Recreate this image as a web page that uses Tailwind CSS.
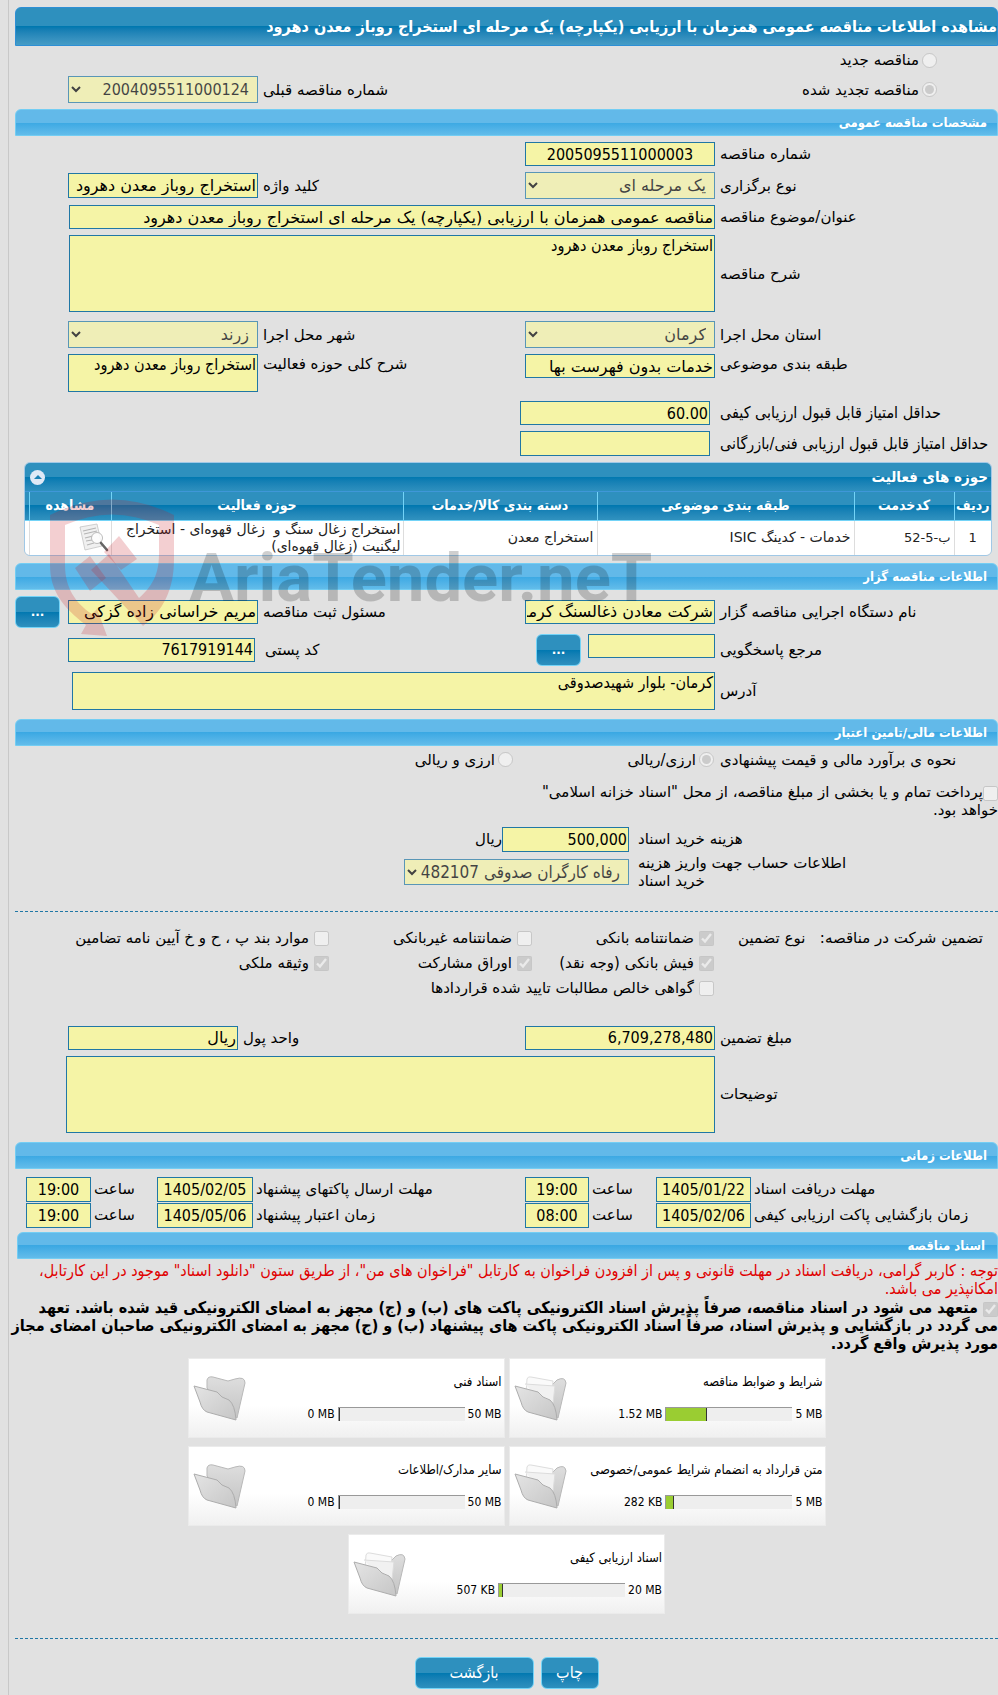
<!DOCTYPE html>
<html lang="fa" dir="rtl">
<head>
  <meta charset="UTF-8">
  <meta name="viewport" content="width=device-width, initial-scale=1">
  <title>مشاهده اطلاعات مناقصه</title>
  <script src="https://cdn.jsdelivr.net/npm/@tailwindcss/browser@4"></script>
</head>
<body class="bg-[#e1e1e1] text-black text-[15px] leading-[18px] font-['DejaVu_Sans',sans-serif] overflow-x-hidden">

  <main class="ml-2 border-l border-[#c8c8c8] pl-1.5 pt-[7px] pb-1.5">

    <h1 class="h-[39px] leading-[37px] rounded-t-md border border-[#2d8fd5] bg-linear-to-b from-[#2e90be] from-50% via-[#0078b0] via-50% to-[#459cc6] text-white text-[16px] font-bold font-['DejaVu_Sans_Condensed',sans-serif] whitespace-nowrap">مشاهده اطلاعات مناقصه عمومی همزمان با ارزیابی (یکپارچه) یک مرحله ای استخراج روباز معدن دهرود</h1>

    <!-- نوع مناقصه -->
    <div class="pr-[61px] h-7 flex items-center">
      <label class="flex items-center gap-[3px]"><input type="radio" name="kind" disabled class="size-[15px]">مناقصه جدید</label>
    </div>
    <div class="mb-1 h-[31px] grid grid-cols-[283px_190px_1fr_190px_53px] items-center">
      <label class="pr-[61px] flex items-center gap-[3px]"><input type="radio" name="kind" checked disabled class="size-[15px]">مناقصه تجدید شده</label>
      <label for="prev" class="col-start-3 pl-[5px] text-left">شماره مناقصه قبلی</label>
      <select id="prev" disabled class="w-full h-[27px] px-1 border border-[#2077a5] bg-[#f5f4a6] text-[16px] font-['DejaVu_Sans_Condensed',sans-serif] opacity-70"><option>2004095511000124</option></select>
    </div>

    <h2 class="h-[27px] leading-[25px] pr-2.5 rounded-t-md border border-[#73cdf3] bg-linear-to-b from-[#62b9e9] from-50% via-[#3aa8e3] via-50% to-[#62bcea] text-white text-[13px] font-bold font-['DejaVu_Sans_Condensed',sans-serif]">مشخصات مناقصه عمومی</h2>

    <!-- مشخصات -->
    <div class="mt-1.5 flex flex-col gap-1.5">
      <div class="grid grid-cols-[283px_190px_1fr_190px_53px] items-center">
        <label for="number" class="pl-[5px] text-left">شماره مناقصه</label>
        <input id="number" readonly value="2005095511000003" class="w-full h-6 px-px border border-[#2077a5] bg-[#f5f4a6] text-[16px] font-['DejaVu_Sans_Condensed',sans-serif] text-center">
      </div>
      <div class="grid grid-cols-[283px_190px_1fr_190px_53px] items-center">
        <label for="type" class="pl-[5px] text-left">نوع برگزاری</label>
        <select id="type" disabled class="w-full h-[27px] px-1 border border-[#2077a5] bg-[#f5f4a6] text-[16px] opacity-70"><option>یک مرحله ای</option></select>
        <label for="keyword" class="pl-[5px] text-left">کلید واژه</label>
        <input id="keyword" readonly value="استخراج روباز معدن دهرود" class="w-full h-[25px] px-px border border-[#2077a5] bg-[#f5f4a6] text-[16px]">
      </div>
      <div class="grid grid-cols-[283px_1fr_54px] items-center">
        <label for="subject" class="pl-[5px] text-left">عنوان/موضوع مناقصه</label>
        <input id="subject" readonly value="مناقصه عمومی همزمان با ارزیابی (یکپارچه) یک مرحله ای استخراج روباز معدن دهرود" class="w-full h-6 px-px border border-[#2077a5] bg-[#f5f4a6] text-[16px]">
      </div>
      <div class="grid grid-cols-[283px_1fr_54px] items-center">
        <label for="desc" class="pl-[5px] text-left">شرح مناقصه</label>
        <textarea id="desc" readonly class="block w-full h-[77px] px-px border border-[#2077a5] bg-[#f5f4a6] text-[16px] leading-5 font-['DejaVu_Sans_Condensed',sans-serif] resize-none">استخراج روباز معدن دهرود</textarea>
      </div>
      <div class="mt-[3px] grid grid-cols-[283px_190px_1fr_190px_53px] items-center">
        <label for="province" class="pl-[5px] text-left">استان محل اجرا</label>
        <select id="province" disabled class="w-full h-[27px] px-1 border border-[#2077a5] bg-[#f5f4a6] text-[16px] opacity-70"><option>کرمان</option></select>
        <label for="city" class="pl-[5px] text-left">شهر محل اجرا</label>
        <select id="city" disabled class="w-full h-[27px] px-1 border border-[#2077a5] bg-[#f5f4a6] text-[16px] opacity-70"><option>زرند</option></select>
      </div>
      <div class="grid grid-cols-[283px_190px_1fr_190px_53px] items-start">
        <label for="category" class="pl-[5px] leading-5 text-left">طبقه بندی موضوعی</label>
        <input id="category" readonly value="خدمات بدون فهرست بها" class="w-full h-6 px-px border border-[#2077a5] bg-[#f5f4a6] text-[16px]">
        <label for="scope" class="pl-[5px] leading-5 text-left">شرح کلی حوزه فعالیت</label>
        <textarea id="scope" readonly class="block w-full h-[38px] px-px border border-[#2077a5] bg-[#f5f4a6] text-[16px] leading-5 font-['DejaVu_Sans_Condensed',sans-serif] resize-none">استخراج روباز معدن دهرود</textarea>
      </div>
      <div class="mt-[3px] grid grid-cols-[288px_190px] items-center text-[16px] font-['DejaVu_Sans_Condensed',sans-serif]">
        <label for="minq" class="pl-2.5 text-left">حداقل امتیاز قابل قبول ارزیابی کیفی</label>
        <input id="minq" readonly value="60.00" class="w-full h-6 px-px border border-[#2077a5] bg-[#f5f4a6]">
      </div>
      <div class="grid grid-cols-[288px_190px] items-center text-[16px] font-['DejaVu_Sans_Condensed',sans-serif]">
        <label for="mint" class="pl-2.5 text-left whitespace-nowrap">حداقل امتیاز قابل قبول ارزیابی فنی/بازرگانی</label>
        <input id="mint" readonly class="w-full h-[25px] px-px border border-[#2077a5] bg-[#f5f4a6]">
      </div>
    </div>

    <!-- حوزه های فعالیت -->
    <section class="relative mt-1.5 mb-[7px] ml-[9px] mr-1.5">
      <div class="rounded-md border border-[#a0c8e6] overflow-hidden">
        <div class="h-[29px] flex items-center justify-between pr-[3px] pl-[5px] border-b border-[#3f97d8] bg-linear-to-b from-[#2e90be] from-50% via-[#0078b0] via-50% to-[#2e90be] text-white">
          <h3 class="font-bold text-[15px] font-['DejaVu_Sans_Condensed',sans-serif]">حوزه های فعالیت</h3>
          <button type="button" aria-label="بستن" class="size-[15px] rounded-full bg-[#dfe9f6] flex items-center justify-center">
            <svg viewBox="0 0 8 4" class="w-2 h-1"><path d="M4 0 8 4H0Z" fill="#1c80b4"/></svg>
          </button>
        </div>
        <table class="w-full table-fixed border-collapse text-[14px] leading-[17px] text-[#222]">
          <colgroup>
            <col class="w-[37px]"><col class="w-[100px]"><col class="w-[257px]"><col class="w-[194px]"><col><col class="w-[82px]"><col class="w-[4px]">
          </colgroup>
          <thead>
            <tr class="h-7 bg-linear-to-b from-[#2e90be] from-50% via-[#0078b0] via-50% to-[#2e90be] text-white text-[14px] font-['DejaVu_Sans_Condensed',sans-serif] border-b border-[#73d3f7]">
              <th class="border-l border-[#73d3f7]">ردیف</th>
              <th class="border-l border-[#73d3f7]">کدخدمت</th>
              <th class="border-l border-[#73d3f7]">طبقه بندی موضوعی</th>
              <th class="border-l border-[#73d3f7]">دسته بندی کالا/خدمات</th>
              <th class="border-l border-[#73d3f7]">حوزه فعالیت</th>
              <th class="border-l border-[#73d3f7]">مشاهده</th>
              <th></th>
            </tr>
          </thead>
          <tbody>
            <tr class="h-[34px] bg-white">
              <td class="border-l border-[#ddd] text-center text-[13px]">1</td>
              <td class="border-l border-[#ddd] pr-[3px] text-[13px]">ب-5-52</td>
              <td class="border-l border-[#ddd] pr-[3px]">خدمات - کدینگ ISIC</td>
              <td class="border-l border-[#ddd] pr-[3px]">استخراج معدن</td>
              <td class="border-l border-[#ddd] pr-0.5 whitespace-nowrap">استخراج زغال سنگ و &nbsp;زغال قهوه‌ای - استخراج<br>لیگنیت (زغال قهوه‌ای)</td>
              <td class="border-l border-[#ddd] pr-0.5">
                <svg viewBox="0 0 30 30" class="size-[30px]">
                  <path d="M1 4 18 1 23 23 6 27Z" fill="#f0f0f0" stroke="#c4c4c4" stroke-width=".8"/>
                  <path d="M4 8 17 5M5 11 18 8M6 15 14 13M7 18 13 17M8 22 15 20" stroke="#b5b5b5" stroke-width="1.2"/>
                  <circle cx="18" cy="15" r="5.5" fill="#fff" fill-opacity=".8" stroke="#bbb"/>
                  <path d="m22 20 6 7" stroke="#666" stroke-width="2.6" stroke-linecap="round"/>
                </svg>
              </td>
              <td></td>
            </tr>
          </tbody>
        </table>
      </div>

      <!-- واترمارک -->
      <svg viewBox="0 0 620 140" class="absolute z-10 left-[26px] top-[37px] w-[620px] h-[140px] overflow-visible pointer-events-none" aria-hidden="true">
        <g fill="#c81e28" fill-opacity=".21">
          <path fill-rule="evenodd" d="M0 16Q62-15 124 16V60C124 91 113 112 93 127L41 71 59 55 89 99C105 85 109 72 109 54V26Q62 5 15 26V66C15 88 25 104 42 115L47 110 57 137 31 135 36 126C12 108 0 91 0 66Z"/>
          <path d="M69 37 87 60 71 71 54 53ZM25 69 40 57 56 79 40 92Z"/>
        </g>
        <text x="139" y="102" direction="ltr" font-family="Roboto,sans-serif" font-weight="700" font-size="67" fill="#000" fill-opacity=".19">AriaTender.neT</text>
      </svg>
    </section>

    <h2 class="h-[27px] leading-[25px] pr-2.5 rounded-t-md border border-[#73cdf3] bg-linear-to-b from-[#62b9e9] from-50% via-[#3aa8e3] via-50% to-[#62bcea] text-white text-[13px] font-bold font-['DejaVu_Sans_Condensed',sans-serif]">اطلاعات مناقصه گزار</h2>

    <!-- مناقصه گزار -->
    <div class="mt-1.5 mb-[9px] flex flex-col gap-1.5">
      <div class="grid grid-cols-[283px_190px_1fr_190px_53px] items-center">
        <label for="org" class="pl-[5px] text-left">نام دستگاه اجرایی مناقصه گزار</label>
        <input id="org" readonly value="شرکت معادن ذغالسنگ کرمان" class="w-full h-6 px-px border border-[#2077a5] bg-[#f5f4a6] text-[16px]">
        <label for="officer" class="pl-[5px] text-left">مسئول ثبت مناقصه</label>
        <input id="officer" readonly value="مریم خراسانی زاده گزکی" class="w-full h-6 px-px border border-[#2077a5] bg-[#f5f4a6] text-[16px]">
        <button type="button" class="justify-self-end w-[45px] h-8 rounded-md border border-[#73d3f7] bg-linear-to-b from-[#2e90be] from-50% via-[#0078b0] via-50% to-[#2e90be] text-white text-[12px] font-bold">...</button>
      </div>
      <div class="grid grid-cols-[283px_190px_1fr_187px_53px] items-center">
        <label for="ref" class="pl-[5px] text-left">مرجع پاسخگویی</label>
        <div class="flex gap-[7px]">
          <input id="ref" readonly class="w-[127px] h-6 px-px border border-[#2077a5] bg-[#f5f4a6] text-[16px]">
          <button type="button" class="w-[45px] h-8 rounded-md border border-[#73d3f7] bg-linear-to-b from-[#2e90be] from-50% via-[#0078b0] via-50% to-[#2e90be] text-white text-[12px] font-bold">...</button>
        </div>
        <label for="postal" class="pl-2.5 text-left">کد پستی</label>
        <input id="postal" readonly value="7617919144" class="w-full h-6 px-px border border-[#2077a5] bg-[#f5f4a6] text-[16px] font-['DejaVu_Sans_Condensed',sans-serif]">
      </div>
      <div class="grid grid-cols-[283px_1fr_57px] items-center">
        <label for="address" class="pl-[5px] text-left">آدرس</label>
        <textarea id="address" readonly class="block w-full h-[38px] px-px border border-[#2077a5] bg-[#f5f4a6] text-[16px] leading-5 font-['DejaVu_Sans_Condensed',sans-serif] resize-none">کرمان- بلوار شهیدصدوقی</textarea>
      </div>
    </div>

    <h2 class="h-[27px] leading-[25px] pr-2.5 rounded-t-md border border-[#73cdf3] bg-linear-to-b from-[#62b9e9] from-50% via-[#3aa8e3] via-50% to-[#62bcea] text-white text-[13px] font-bold font-['DejaVu_Sans_Condensed',sans-serif]">اطلاعات مالی/تامین اعتبار</h2>

    <!-- مالی -->
    <div class="h-7 grid grid-cols-[284px_201px_1fr] items-center">
      <span class="pl-1.5 text-left">نحوه ی برآورد مالی و قیمت پیشنهادی</span>
      <label class="flex items-center gap-[3px]"><input type="radio" name="cur" checked disabled class="size-[15px]">ارزی/ریالی</label>
      <label class="flex items-center gap-[3px]"><input type="radio" name="cur" disabled class="size-[15px]">ارزی و ریالی</label>
    </div>
    <label class="block mt-[9px] mb-2"><input type="checkbox" disabled class="size-[15px] align-text-bottom">پرداخت تمام و یا بخشی از مبلغ مناقصه، از محل "اسناد خزانه اسلامی"<br>خواهد بود.</label>
    <div class="grid grid-cols-[369px_127px_1fr] items-center">
      <label for="fee" class="pl-[9px] text-left">هزینه خرید اسناد</label>
      <input id="fee" readonly value="500,000" class="w-full h-[25px] px-px border border-[#2077a5] bg-[#f5f4a6] text-[16px] font-['DejaVu_Sans_Condensed',sans-serif]">
      <span>ریال</span>
    </div>
    <div class="mt-0.5 grid grid-cols-[369px_225px] items-center">
      <label for="account" class="pl-[9px] text-left">اطلاعات حساب جهت واریز هزینه<br>خرید اسناد</label>
      <select id="account" disabled class="w-full h-[26px] pl-0 pr-1 border border-[#2077a5] bg-[#f5f4a6] text-[17px] font-['DejaVu_Sans_Condensed',sans-serif] opacity-70"><option>رفاه کارگران صدوقی 482107</option></select>
    </div>

    <hr class="mt-[21px] border-t border-dashed border-[#2077a5]">

    <!-- تضمین -->
    <div class="mt-3.5 grid grid-cols-[284px_182px_203px_1fr] auto-rows-[25px] items-center">
      <div class="pr-[15px] pl-6 flex justify-between"><span>تضمین شرکت در مناقصه:</span><span>نوع تضمین</span></div>
      <label class="flex items-center gap-[5px]"><input type="checkbox" checked disabled class="size-[15px]">ضمانتنامه بانکی</label>
      <label class="flex items-center gap-[5px]"><input type="checkbox" disabled class="size-[15px]">ضمانتنامه غیربانکی</label>
      <label class="flex items-center gap-[5px]"><input type="checkbox" disabled class="size-[15px]">موارد بند پ ، ح و خ آیین نامه تضامین</label>
      <label class="col-start-2 flex items-center gap-[5px]"><input type="checkbox" checked disabled class="size-[15px]">فیش بانکی (وجه نقد)</label>
      <label class="flex items-center gap-[5px]"><input type="checkbox" checked disabled class="size-[15px]">اوراق مشارکت</label>
      <label class="flex items-center gap-[5px]"><input type="checkbox" checked disabled class="size-[15px]">وثیقه ملکی</label>
      <label class="col-start-2 col-span-3 flex items-center gap-[5px]"><input type="checkbox" disabled class="size-[15px]">گواهی خالص مطالبات تایید شده قراردادها</label>
    </div>
    <div class="mt-[25px] mb-[9px] flex flex-col gap-1.5">
      <div class="grid grid-cols-[283px_190px_1fr_170px_53px] items-center">
        <label for="amount" class="pl-[5px] text-left">مبلغ تضمین</label>
        <input id="amount" readonly value="6,709,278,480" class="w-full h-6 px-px border border-[#2077a5] bg-[#f5f4a6] text-[16px] font-['DejaVu_Sans_Condensed',sans-serif]">
        <label for="unit" class="pl-[5px] text-left">واحد پول</label>
        <input id="unit" readonly value="ریال" class="w-full h-6 px-px border border-[#2077a5] bg-[#f5f4a6] text-[16px]">
      </div>
      <div class="grid grid-cols-[283px_1fr_51px] items-center">
        <label for="notes" class="pl-[5px] text-left">توضیحات</label>
        <textarea id="notes" readonly class="block w-full h-[77px] px-px border border-[#2077a5] bg-[#f5f4a6] text-[16px] leading-5 font-['DejaVu_Sans_Condensed',sans-serif] resize-none"></textarea>
      </div>
    </div>

    <h2 class="h-[27px] leading-[25px] pr-2.5 rounded-t-md border border-[#73cdf3] bg-linear-to-b from-[#62b9e9] from-50% via-[#3aa8e3] via-50% to-[#62bcea] text-white text-[13px] font-bold font-['DejaVu_Sans_Condensed',sans-serif]">اطلاعات زمانی</h2>

    <!-- زمان -->
    <div class="mt-2 mb-1 grid grid-cols-[247px_95px_67px_64px_1fr_96px_66px_65px_11px] gap-y-px items-center">
      <label for="d1" class="pl-[3px] text-left">مهلت دریافت اسناد</label>
      <input id="d1" readonly value="1405/01/22" class="w-full h-[25px] border border-[#2077a5] bg-[#f5f4a6] text-[16px] font-['DejaVu_Sans_Condensed',sans-serif] text-center">
      <label for="t1" class="pl-[3px] text-left">ساعت</label>
      <input id="t1" readonly value="19:00" class="w-full h-[25px] border border-[#2077a5] bg-[#f5f4a6] text-[16px] font-['DejaVu_Sans_Condensed',sans-serif] text-center">
      <label for="d2" class="pl-[3px] text-left">مهلت ارسال پاکتهای پیشنهاد</label>
      <input id="d2" readonly value="1405/02/05" class="w-full h-[25px] border border-[#2077a5] bg-[#f5f4a6] text-[16px] font-['DejaVu_Sans_Condensed',sans-serif] text-center">
      <label for="t2" class="pl-[3px] text-left">ساعت</label>
      <input id="t2" readonly value="19:00" class="w-full h-[25px] border border-[#2077a5] bg-[#f5f4a6] text-[16px] font-['DejaVu_Sans_Condensed',sans-serif] text-center">

      <label for="d3" class="col-start-1 pl-[3px] text-left">زمان بازگشایی پاکت ارزیابی کیفی</label>
      <input id="d3" readonly value="1405/02/06" class="w-full h-[25px] border border-[#2077a5] bg-[#f5f4a6] text-[16px] font-['DejaVu_Sans_Condensed',sans-serif] text-center">
      <label for="t3" class="pl-[3px] text-left">ساعت</label>
      <input id="t3" readonly value="08:00" class="w-full h-[25px] border border-[#2077a5] bg-[#f5f4a6] text-[16px] font-['DejaVu_Sans_Condensed',sans-serif] text-center">
      <label for="d4" class="pl-[3px] text-left">زمان اعتبار پیشنهاد</label>
      <input id="d4" readonly value="1405/05/06" class="w-full h-[25px] border border-[#2077a5] bg-[#f5f4a6] text-[16px] font-['DejaVu_Sans_Condensed',sans-serif] text-center">
      <label for="t4" class="pl-[3px] text-left">ساعت</label>
      <input id="t4" readonly value="19:00" class="w-full h-[25px] border border-[#2077a5] bg-[#f5f4a6] text-[16px] font-['DejaVu_Sans_Condensed',sans-serif] text-center">
    </div>

    <h2 class="ml-0.5 h-[27px] leading-[25px] pr-3 rounded-t-md border border-[#73cdf3] bg-linear-to-b from-[#62b9e9] from-50% via-[#3aa8e3] via-50% to-[#62bcea] text-white text-[13px] font-bold font-['DejaVu_Sans_Condensed',sans-serif]">اسناد مناقصه</h2>

    <!-- اسناد -->
    <p class="mt-[3px] text-[#e00000] text-[16px] leading-[18px] font-['DejaVu_Sans_Condensed',sans-serif] whitespace-nowrap">توجه : کاربر گرامی، دریافت اسناد در مهلت قانونی و پس از افزودن فراخوان به کارتابل "فراخوان های من"، از طریق ستون "دانلود اسناد" موجود در این کارتابل،<br>امکانپذیر می باشد.</p>
    <label class="block mt-px font-bold text-[16px] leading-[18px] font-['DejaVu_Sans_Condensed',sans-serif] whitespace-nowrap"><input type="checkbox" checked disabled class="size-[15px] ml-[5px] align-text-bottom">متعهد می شود در اسناد مناقصه، صرفاً پذیرش اسناد الکترونیکی پاکت های (ب) و (ج) مجهز به امضای الکترونیکی قید شده باشد. تعهد<br>می گردد در بازگشایی و پذیرش اسناد، صرفاً اسناد الکترونیکی پاکت های پیشنهاد (ب) و (ج) مجهز به امضای الکترونیکی صاحبان امضای مجاز<br>مورد پذیرش واقع گردد.</label>

    <svg class="absolute size-0" aria-hidden="true">
      <defs>
        <linearGradient id="folder" x1="0" y1="0" x2="1" y2="1"><stop offset="0" stop-color="#e4e4e4"/><stop offset="1" stop-color="#c6c6c6"/></linearGradient>
        <linearGradient id="back" x1="0" y1="0" x2="0" y2="1"><stop offset="0" stop-color="#dedede"/><stop offset="1" stop-color="#c4c4c4"/></linearGradient>
      </defs>
    </svg>

    <div class="mx-auto mt-[5px] max-w-[700px] flex flex-wrap justify-center gap-x-1 gap-y-2 text-[12px] leading-4 font-['DejaVu_Sans_Condensed',sans-serif]">
      <div class="w-[317px] h-20 pr-0.5 pl-1 flex items-center border border-[#ebebeb] bg-linear-to-b from-white from-60% to-[#f0f0f0]">
        <div class="flex-1">
          <p class="text-[13px]">شرایط و ضوابط مناقصه</p>
          <div class="mt-4 flex items-center gap-[3px]">
            <span dir="ltr">5 MB</span>
            <div dir="ltr" class="w-[127px] h-[14px] border-t border-l border-[#999] bg-[#eee]"><div class="h-full bg-[#9acd32] border-r border-[#333]" style="width:32%"></div></div>
            <span dir="ltr">1.52 MB</span>
          </div>
        </div>
        <svg viewBox="0 0 54 48" class="w-[54px] h-12">
          <path d="M15 6 37 12 43 6Q51 2 52 9L44 44 36 40Z" fill="url(#back)" stroke="#b9b9b9"/>
          <path d="M13 5Q14 2 17 3L39 7 36 38 12 20Z" fill="#fafafa" stroke="#ddd"/>
          <path d="M11 10 41 12 38 38" fill="#f1f1f1" stroke="#dcdcdc"/>
          <path d="M1 12 24 18Q28 24 36 26 42 31 43 46L14 38Q9 36 7 28Z" fill="url(#folder)" stroke="#adadad" stroke-linejoin="round"/>
        </svg>
      </div>
      <div class="w-[317px] h-20 pr-0.5 pl-1 flex items-center border border-[#ebebeb] bg-linear-to-b from-white from-60% to-[#f0f0f0]">
        <div class="flex-1">
          <p class="text-[13px]">اسناد فنی</p>
          <div class="mt-4 flex items-center gap-[3px]">
            <span dir="ltr">50 MB</span>
            <div dir="ltr" class="w-[127px] h-[14px] border-t border-l border-[#999] bg-[#eee]"><div class="h-full bg-[#9acd32] border-r border-[#333]" style="width:0%"></div></div>
            <span dir="ltr">0 MB</span>
          </div>
        </div>
        <svg viewBox="0 0 54 48" class="w-[54px] h-12">
          <path d="M14 14V6Q15 2 20 3L35 7 42 5Q52 2 52 9L44 44 36 40Z" fill="url(#back)" stroke="#b9b9b9"/>
          <path d="M1 12 24 18Q28 24 36 26 42 31 43 46L14 38Q9 36 7 28Z" fill="url(#folder)" stroke="#adadad" stroke-linejoin="round"/>
        </svg>
      </div>
      <div class="w-[317px] h-20 pr-0.5 pl-1 flex items-center border border-[#ebebeb] bg-linear-to-b from-white from-60% to-[#f0f0f0]">
        <div class="flex-1">
          <p class="text-[13px] whitespace-nowrap">متن قرارداد به انضمام شرایط عمومی/خصوصی</p>
          <div class="mt-4 flex items-center gap-[3px]">
            <span dir="ltr">5 MB</span>
            <div dir="ltr" class="w-[127px] h-[14px] border-t border-l border-[#999] bg-[#eee]"><div class="h-full bg-[#9acd32] border-r border-[#333]" style="width:6%"></div></div>
            <span dir="ltr">282 KB</span>
          </div>
        </div>
        <svg viewBox="0 0 54 48" class="w-[54px] h-12">
          <path d="M15 6 37 12 43 6Q51 2 52 9L44 44 36 40Z" fill="url(#back)" stroke="#b9b9b9"/>
          <path d="M13 5Q14 2 17 3L39 7 36 38 12 20Z" fill="#fafafa" stroke="#ddd"/>
          <path d="M11 10 41 12 38 38" fill="#f1f1f1" stroke="#dcdcdc"/>
          <path d="M1 12 24 18Q28 24 36 26 42 31 43 46L14 38Q9 36 7 28Z" fill="url(#folder)" stroke="#adadad" stroke-linejoin="round"/>
        </svg>
      </div>
      <div class="w-[317px] h-20 pr-0.5 pl-1 flex items-center border border-[#ebebeb] bg-linear-to-b from-white from-60% to-[#f0f0f0]">
        <div class="flex-1">
          <p class="text-[13px]">سایر مدارک/اطلاعات</p>
          <div class="mt-4 flex items-center gap-[3px]">
            <span dir="ltr">50 MB</span>
            <div dir="ltr" class="w-[127px] h-[14px] border-t border-l border-[#999] bg-[#eee]"><div class="h-full bg-[#9acd32] border-r border-[#333]" style="width:0%"></div></div>
            <span dir="ltr">0 MB</span>
          </div>
        </div>
        <svg viewBox="0 0 54 48" class="w-[54px] h-12">
          <path d="M14 14V6Q15 2 20 3L35 7 42 5Q52 2 52 9L44 44 36 40Z" fill="url(#back)" stroke="#b9b9b9"/>
          <path d="M1 12 24 18Q28 24 36 26 42 31 43 46L14 38Q9 36 7 28Z" fill="url(#folder)" stroke="#adadad" stroke-linejoin="round"/>
        </svg>
      </div>
      <div class="w-[317px] h-20 pr-0.5 pl-1 flex items-center border border-[#ebebeb] bg-linear-to-b from-white from-60% to-[#f0f0f0]">
        <div class="flex-1">
          <p class="text-[13px]">اسناد ارزیابی کیفی</p>
          <div class="mt-4 flex items-center gap-[3px]">
            <span dir="ltr">20 MB</span>
            <div dir="ltr" class="w-[127px] h-[14px] border-t border-l border-[#999] bg-[#eee]"><div class="h-full bg-[#9acd32] border-r border-[#333]" style="width:3%"></div></div>
            <span dir="ltr">507 KB</span>
          </div>
        </div>
        <svg viewBox="0 0 54 48" class="w-[54px] h-12">
          <path d="M15 6 37 12 43 6Q51 2 52 9L44 44 36 40Z" fill="url(#back)" stroke="#b9b9b9"/>
          <path d="M13 5Q14 2 17 3L39 7 36 38 12 20Z" fill="#fafafa" stroke="#ddd"/>
          <path d="M11 10 41 12 38 38" fill="#f1f1f1" stroke="#dcdcdc"/>
          <path d="M1 12 24 18Q28 24 36 26 42 31 43 46L14 38Q9 36 7 28Z" fill="url(#folder)" stroke="#adadad" stroke-linejoin="round"/>
        </svg>
      </div>
    </div>

    <hr class="mt-6 border-t border-dashed border-[#2077a5]">

    <div class="mt-[18px] flex justify-center gap-[7px] text-[16px] font-['DejaVu_Sans_Condensed',sans-serif]">
      <button type="button" class="w-[58px] h-8 rounded-md border border-[#73d3f7] bg-linear-to-b from-[#2e90be] from-50% via-[#0078b0] via-50% to-[#2e90be] text-white">چاپ</button>
      <button type="button" class="w-[119px] h-8 rounded-md border border-[#73d3f7] bg-linear-to-b from-[#2e90be] from-50% via-[#0078b0] via-50% to-[#2e90be] text-white">بازگشت</button>
    </div>
  </main>
</body>
</html>
